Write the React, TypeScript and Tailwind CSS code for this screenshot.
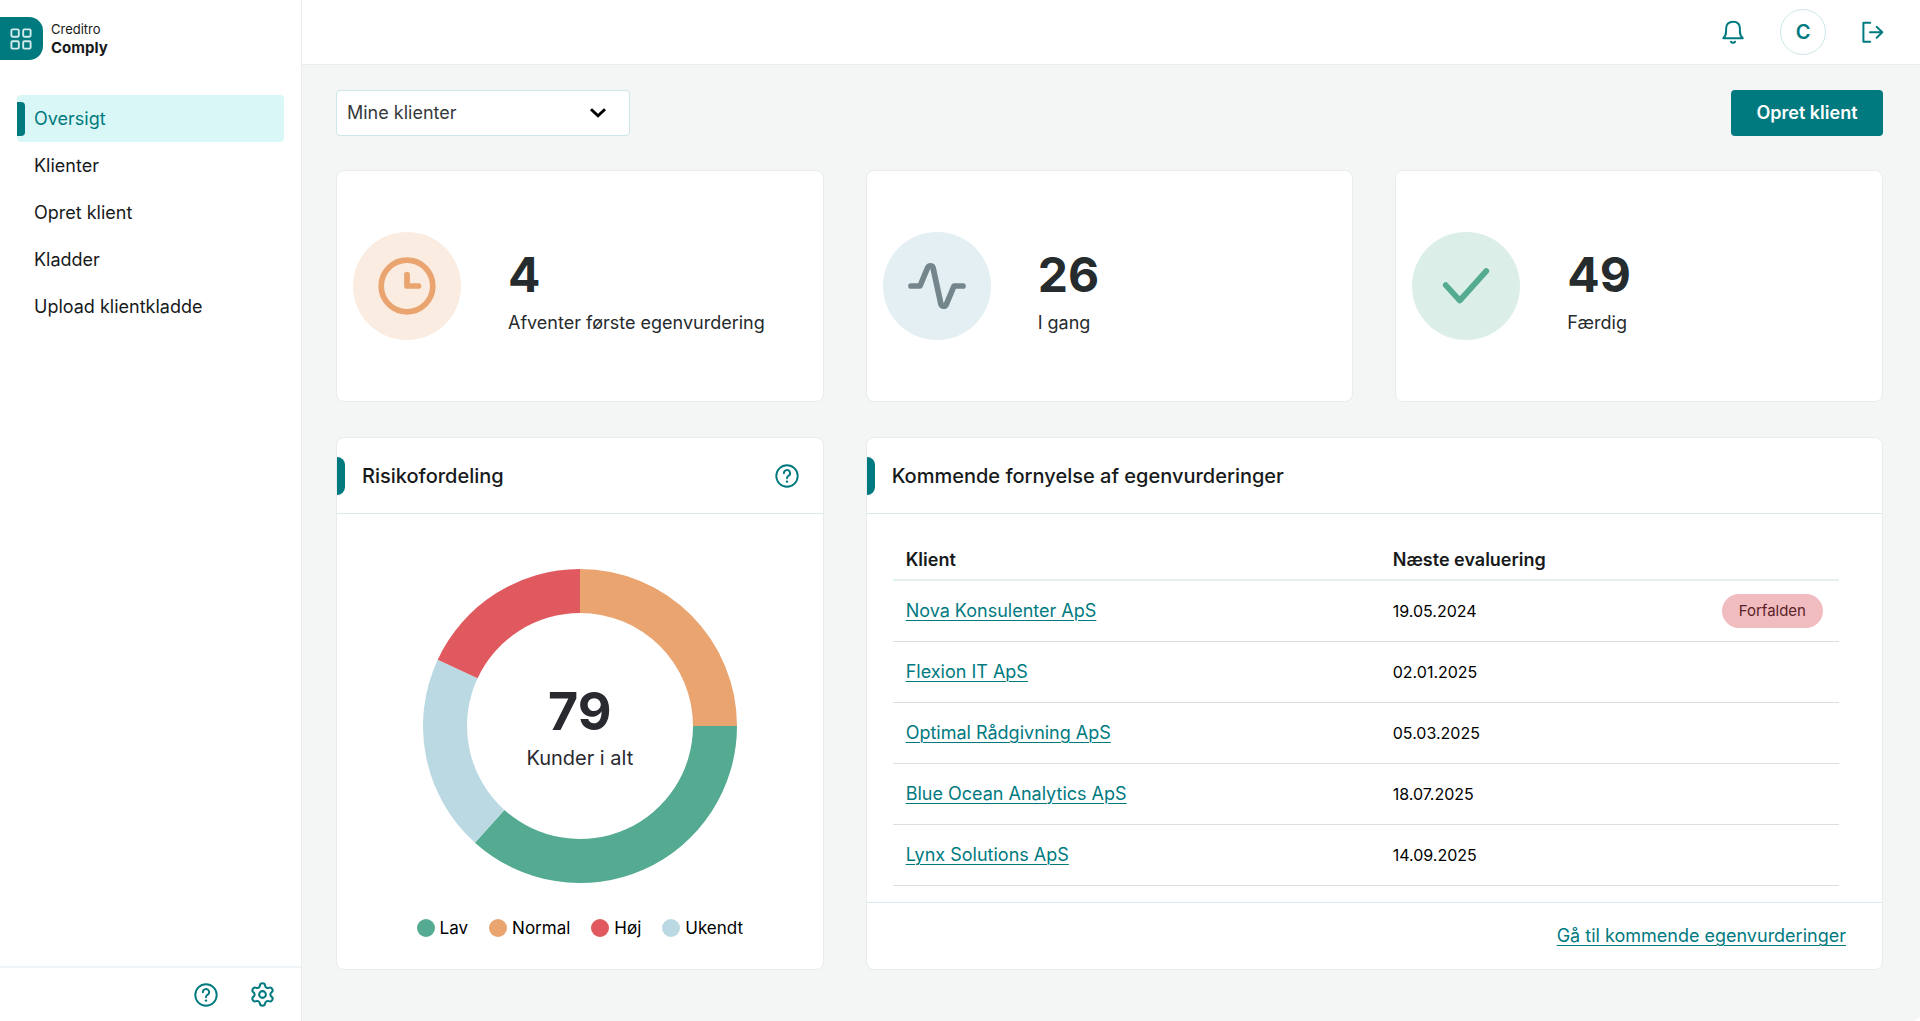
import type { ReactNode } from "react";
import { Settings } from "lucide-react";

const navItems = ["Oversigt", "Klienter", "Opret klient", "Kladder", "Upload klientkladde"];

const renewals = [
  { client: "Nova Konsulenter ApS", date: "19.05.2024", overdue: true },
  { client: "Flexion IT ApS", date: "02.01.2025", overdue: false },
  { client: "Optimal Rådgivning ApS", date: "05.03.2025", overdue: false },
  { client: "Blue Ocean Analytics ApS", date: "18.07.2025", overdue: false },
  { client: "Lynx Solutions ApS", date: "14.09.2025", overdue: false },
];

const segments = [
  { color: "#e9a470", from: 0, to: 90 },
  { color: "#54ab92", from: 90, to: 222 },
  { color: "#bbd9e3", from: 222, to: 295 },
  { color: "#df595e", from: 295, to: 360 },
];

const legend = [
  { label: "Lav", dot: "bg-[#54ab92]" },
  { label: "Normal", dot: "bg-[#e9a470]" },
  { label: "Høj", dot: "bg-[#df595e]" },
  { label: "Ukendt", dot: "bg-[#bbd9e3]" },
];

function HelpIcon() {
  return (
    <svg viewBox="0 0 24 24" className="size-6" fill="none" stroke="currentColor" strokeWidth="1.9" strokeLinecap="round" strokeLinejoin="round" aria-hidden="true">
      <circle cx="12" cy="12" r="10.7" />
      <path d="M8.9 9.2a3.1 3.1 0 1 1 4.6 2.7c-.9.5-1.5 1-1.5 2v.3" />
      <circle cx="12" cy="17.6" r="1.2" fill="currentColor" stroke="none" />
    </svg>
  );
}

function BellIcon() {
  return (
    <svg viewBox="0 0 24 24" className="size-6" fill="none" stroke="currentColor" strokeWidth="2" strokeLinecap="round" strokeLinejoin="round" aria-hidden="true">
      <path d="M2.2 18.2h19.6c-2.2-1.8-2.9-3.8-2.9-7V8.6c0-4.3-2.7-6.8-6.9-6.8S5.1 4.3 5.1 8.6v2.6c0 3.2-.7 5.2-2.9 7z" />
      <path d="M10 21.7c.7 1.3 3.3 1.3 4 0" />
    </svg>
  );
}

function LogoutIcon() {
  return (
    <svg viewBox="0 0 24 24" className="size-6" fill="none" stroke="currentColor" strokeWidth="2" strokeLinecap="round" strokeLinejoin="round" aria-hidden="true">
      <path d="M9.2 2.8H2.4v18.9h6.8" />
      <path d="M9 12.3h12.3M15.7 6.9l5.6 5.4-5.6 5.4" />
    </svg>
  );
}

function LogoMark() {
  return (
    <svg viewBox="0 0 22 22" className="size-[22px]" fill="none" stroke="#d3ebec" strokeWidth="1.9" aria-hidden="true">
      <rect x="1.4" y="1.4" width="7.4" height="7.4" rx="1.2" />
      <rect x="13.2" y="1.4" width="7.4" height="7.4" rx="1.2" />
      <rect x="1.4" y="13.2" width="7.4" height="7.4" rx="1.2" />
      <rect x="13.2" y="13.2" width="7.4" height="7.4" rx="1.2" />
    </svg>
  );
}

function Card({ className = "", children }: { className?: string; children: ReactNode }) {
  return <section className={`rounded-lg border border-[#e8ecec] bg-white ${className}`}>{children}</section>;
}

function StatCard({ value, label, circle, children }: { value: number; label: string; circle: string; children: ReactNode }) {
  return (
    <Card className="flex min-h-[232px] items-center gap-[47px] px-4">
      <div className={`flex size-[108px] shrink-0 items-center justify-center rounded-full ${circle}`}>
        <svg viewBox="-30 -30 60 60" className="size-15" fill="none" strokeWidth="5.7" strokeLinecap="round" strokeLinejoin="round" aria-hidden="true">
          {children}
        </svg>
      </div>
      <div className="pt-[10px] text-[#262b2d]">
        <p className="text-5xl leading-14 font-bold">{value}</p>
        <p className="mt-2 text-lg leading-6">{label}</p>
      </div>
    </Card>
  );
}

function CardHeader({ title, children }: { title: string; children?: ReactNode }) {
  return (
    <div className="flex h-19 items-center border-b border-[#dbe9ec] pr-6">
      <span className="h-[38px] w-2 rounded-r-lg bg-[#007a7f]" />
      <h2 className="ml-[17px] flex-1 text-xl leading-6 font-medium text-[#171a1b]">{title}</h2>
      {children}
    </div>
  );
}

function arcPath(from: number, to: number) {
  const point = (deg: number, r: number) => {
    const a = ((deg - 90) * Math.PI) / 180;
    return `${(157 + r * Math.cos(a)).toFixed(2)} ${(157 + r * Math.sin(a)).toFixed(2)}`;
  };
  const large = to - from > 180 ? 1 : 0;
  return `M${point(from, 157)}A157 157 0 ${large} 1 ${point(to, 157)}L${point(to, 113)}A113 113 0 ${large} 0 ${point(from, 113)}Z`;
}

function Donut() {
  return (
    <div className="relative size-[314px]">
      <svg viewBox="0 0 314 314" className="size-full" role="img" aria-label="Risikofordeling">
        {segments.map((s) => (
          <path key={s.color} d={arcPath(s.from, s.to)} fill={s.color} />
        ))}
      </svg>
      <div className="absolute inset-0 flex flex-col items-center justify-center pt-1 text-[#282a30]">
        <p className="text-[52px] leading-15 font-bold">79</p>
        <p className="text-xl leading-8">Kunder i alt</p>
      </div>
    </div>
  );
}

const link = "text-[#007a7f] underline underline-offset-3 decoration-1";

export default function App() {
  return (
    <div className="flex min-h-screen bg-white font-['Inter',sans-serif] text-lg leading-6 text-[#171a1b]">
      <aside className="flex w-[302px] shrink-0 flex-col border-r border-[#e9eded]">
        <div className="mt-[17px] flex items-center gap-2">
          <div className="flex h-[43px] w-[43px] items-center justify-end rounded-r-[14px] bg-[#007a7f] pr-[11px]">
            <LogoMark />
          </div>
          <div>
            <p className="text-[13px] leading-[18px]">Creditro</p>
            <p className="text-[15px] leading-5 font-bold">Comply</p>
          </div>
        </div>
        <nav className="mt-[35px] flex flex-1 flex-col pr-[17px] pl-[17px]">
          {navItems.map((item, i) => (
            <a
              key={item}
              href="#"
              aria-current={i === 0 ? "page" : undefined}
              className={
                i === 0
                  ? "flex h-[47px] items-center gap-[9px] rounded-sm bg-[#d9f7f6] text-[#007a7f]"
                  : "flex h-[47px] items-center pl-[17px]"
              }
            >
              {i === 0 && <span className="h-[34px] w-2 rounded-r-sm bg-[#007a7f]" />}
              {item}
            </a>
          ))}
        </nav>
        <div className="flex h-[55px] items-center justify-end gap-[31px] border-t-2 border-[#eff5f8] pr-[25px] text-[#007a7f]">
          <button type="button" aria-label="Hjælp">
            <HelpIcon />
          </button>
          <button type="button" aria-label="Indstillinger">
            <Settings size={27} strokeWidth={1.8} />
          </button>
        </div>
      </aside>

      <div className="flex min-w-0 flex-1 flex-col">
        <header className="flex h-[65px] items-center justify-end gap-[35px] border-b border-[#e9eded] bg-white pr-[35px] text-[#007a7f]">
          <button type="button" aria-label="Notifikationer">
            <BellIcon />
          </button>
          <button type="button" aria-label="Profil" className="size-[46px] rounded-full border border-[#cde6e8] text-xl font-semibold">
            C
          </button>
          <button type="button" aria-label="Log ud">
            <LogoutIcon />
          </button>
        </header>

        <main className="flex-1 rounded-br-lg bg-[#f4f6f6] pt-[25px] pr-[37px] pb-[51px] pl-[34px]">
          <div className="flex items-center justify-between">
            <div className="relative w-[294px]">
              <select aria-label="Klientfilter" className="h-[46px] w-full appearance-none rounded-sm border border-[#cde6e8] bg-white pr-12 pl-[10px] text-[#363a3b]">
                <option>Mine klienter</option>
              </select>
              <svg viewBox="0 0 16 10" className="pointer-events-none absolute top-[18px] right-6 h-[10px] w-4" fill="none" stroke="#000" strokeWidth="2.9" aria-hidden="true">
                <path d="M1 1.2l7 6.6 7-6.6" />
              </svg>
            </div>
            <button type="button" className="h-[46px] w-[152px] rounded-sm bg-[#007a7f] font-semibold text-white">
              Opret klient
            </button>
          </div>

          <div className="mt-[34px] grid grid-cols-3 gap-x-[42px] gap-y-[35px]">
            <StatCard value={4} label="Afventer første egenvurdering" circle="bg-[#fbece1]">
              <circle r="25.8" stroke="#e9a470" />
              <path d="M0-11.5V0H11.5" stroke="#e9a470" />
            </StatCard>
            <StatCard value={26} label="I gang" circle="bg-[#e3eff3]">
              <path d="M-26 0H-17L-9.5-18Q-8.5-20.2-6.7-20.2Q-4.4-20.2-3.9-18L3.9 18Q4.4 20.2 6.7 20.2Q8.5 20.2 9.5 18L17 0H26" stroke="#74858b" />
            </StatCard>
            <StatCard value={49} label="Færdig" circle="bg-[#dceee8]">
              <path d="M-20.3-.9L-6.2 14.5 20.3-15" stroke="#54ab92" />
            </StatCard>

            <Card>
              <CardHeader title="Risikofordeling">
                <button type="button" aria-label="Hjælp til risikofordeling" className="text-[#007a7f]">
                  <HelpIcon />
                </button>
              </CardHeader>
              <div className="flex flex-col items-center pt-[55px] pb-[29px]">
                <Donut />
                <ul className="mt-[33px] flex gap-[21px] text-[17px] text-black">
                  {legend.map((l) => (
                    <li key={l.label} className="flex items-center gap-[5px]">
                      <span className={`size-[18px] rounded-full ${l.dot}`} />
                      {l.label}
                    </li>
                  ))}
                </ul>
              </div>
            </Card>

            <Card className="col-span-2 flex flex-col">
              <CardHeader title="Kommende fornyelse af egenvurderinger" />
              <div className="flex-1 pt-[26px] pr-[43px] pl-[26px]">
                <table className="w-full table-fixed border-collapse text-left">
                  <thead>
                    <tr className="h-[40px] border-b-2 border-[#e3f1f1]">
                      <th className="w-[52%] pl-[13px] font-semibold">Klient</th>
                      <th className="pl-2 font-semibold">Næste evaluering</th>
                      <th className="w-[140px]" aria-label="Status" />
                    </tr>
                  </thead>
                  <tbody>
                    {renewals.map((r) => (
                      <tr key={r.client} className="h-[61px] border-b border-[#dcdfdf]">
                        <td className="pl-[13px]">
                          <a href="#" className={link}>
                            {r.client}
                          </a>
                        </td>
                        <td className="pl-2 text-base text-black">{r.date}</td>
                        <td className="pr-4 text-right">
                          {r.overdue && (
                            <span className="inline-flex h-[34px] items-center rounded-full bg-[#f1bcbf] px-[17px] text-[15px] text-[#5a2328]">
                              Forfalden
                            </span>
                          )}
                        </td>
                      </tr>
                    ))}
                  </tbody>
                </table>
              </div>
              <div className="flex h-[67px] items-center justify-end border-t border-[#dbe9f0] pr-9">
                <a href="#" className={link}>
                  Gå til kommende egenvurderinger
                </a>
              </div>
            </Card>
          </div>
        </main>
      </div>
    </div>
  );
}
